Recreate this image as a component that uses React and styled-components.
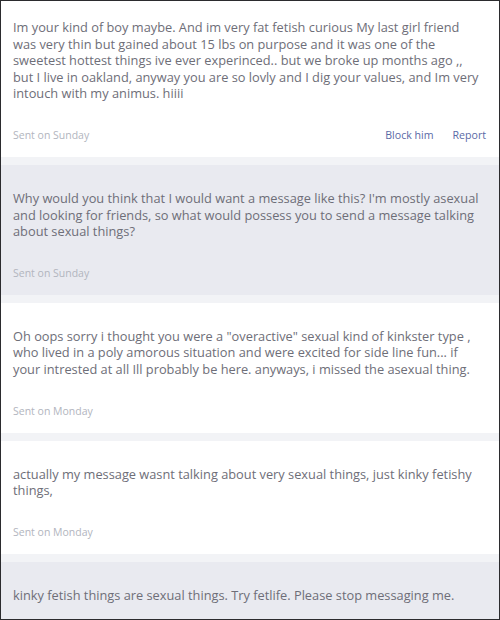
import React from 'react';
import styled, { createGlobalStyle } from 'styled-components';

const GlobalStyle = createGlobalStyle`
  * { box-sizing: border-box; }
  body {
    margin: 0;
    background: #ffffff;
    font-family: 'Open Sans', 'DejaVu Sans', sans-serif;
  }
`;

const messages = [
  {
    text: 'Im your kind of boy maybe. And im very fat fetish curious My last girl friend was very thin but gained about 15 lbs on purpose and it was one of the sweetest hottest things ive ever experinced.. but we broke up months ago ,, but I live in oakland, anyway you are so lovly and I dig your values, and Im very intouch with my animus. hiiii',
    sent: 'Sent on Sunday',
    mine: false,
    actions: true,
  },
  {
    text: "Why would you think that I would want a message like this? I'm mostly asexual and looking for friends, so what would possess you to send a message talking about sexual things?",
    sent: 'Sent on Sunday',
    mine: true,
  },
  {
    text: 'Oh oops sorry i thought you were a "overactive" sexual kind of kinkster type , who lived in a poly amorous situation and were excited for side line fun... if your intrested at all Ill probably be here. anyways, i missed the asexual thing.',
    sent: 'Sent on Monday',
    mine: false,
  },
  {
    text: 'actually my message wasnt talking about very sexual things, just kinky fetishy things,',
    sent: 'Sent on Monday',
    mine: false,
  },
  {
    text: 'kinky fetish things are sexual things. Try fetlife. Please stop messaging me.',
    sent: 'Sent on Monday',
    mine: true,
  },
];

export default function App() {
  return (
    <>
      <GlobalStyle />
      <Frame>
        <Thread>
          {messages.map((m, i) => (
            <Message key={i} mine={m.mine} first={i === 0}>
              <Body>{m.text}</Body>
              <Footer>
                <Sent>{m.sent}</Sent>
                {m.actions && (
                  <Actions>
                    <ActionLink href="#">Block him</ActionLink>
                    <ActionLink href="#">Report</ActionLink>
                  </Actions>
                )}
              </Footer>
            </Message>
          ))}
        </Thread>
      </Frame>
    </>
  );
}

const Frame = styled.div`
  width: 500px;
  height: 620px;
  border: 1px solid #2b2b2e;
  overflow: hidden;
  background: #f2f3f6;
`;

const Thread = styled.div`
  display: flex;
  flex-direction: column;
  gap: 8px;
`;

const Message = styled.div`
  background: ${(p) => (p.mine ? '#e9eaf0' : '#ffffff')};
  padding: ${(p) => (p.first ? '18px' : '25px')} 13px 15px 12px;
`;

const Body = styled.p`
  margin: 0;
  padding-right: 4px;
  font-size: 12.8px;
  line-height: 16.6px;
  color: #6e6e78;
`;

const Footer = styled.div`
  display: flex;
  align-items: center;
  justify-content: space-between;
  margin-top: 26px;
  height: 14px;
`;

const Sent = styled.span`
  font-size: 10.5px;
  color: #b2b5be;
`;

const Actions = styled.div`
  display: flex;
  gap: 19px;
`;

const ActionLink = styled.a`
  font-size: 10.6px;
  color: #5a6aa6;
  text-decoration: none;
`;
